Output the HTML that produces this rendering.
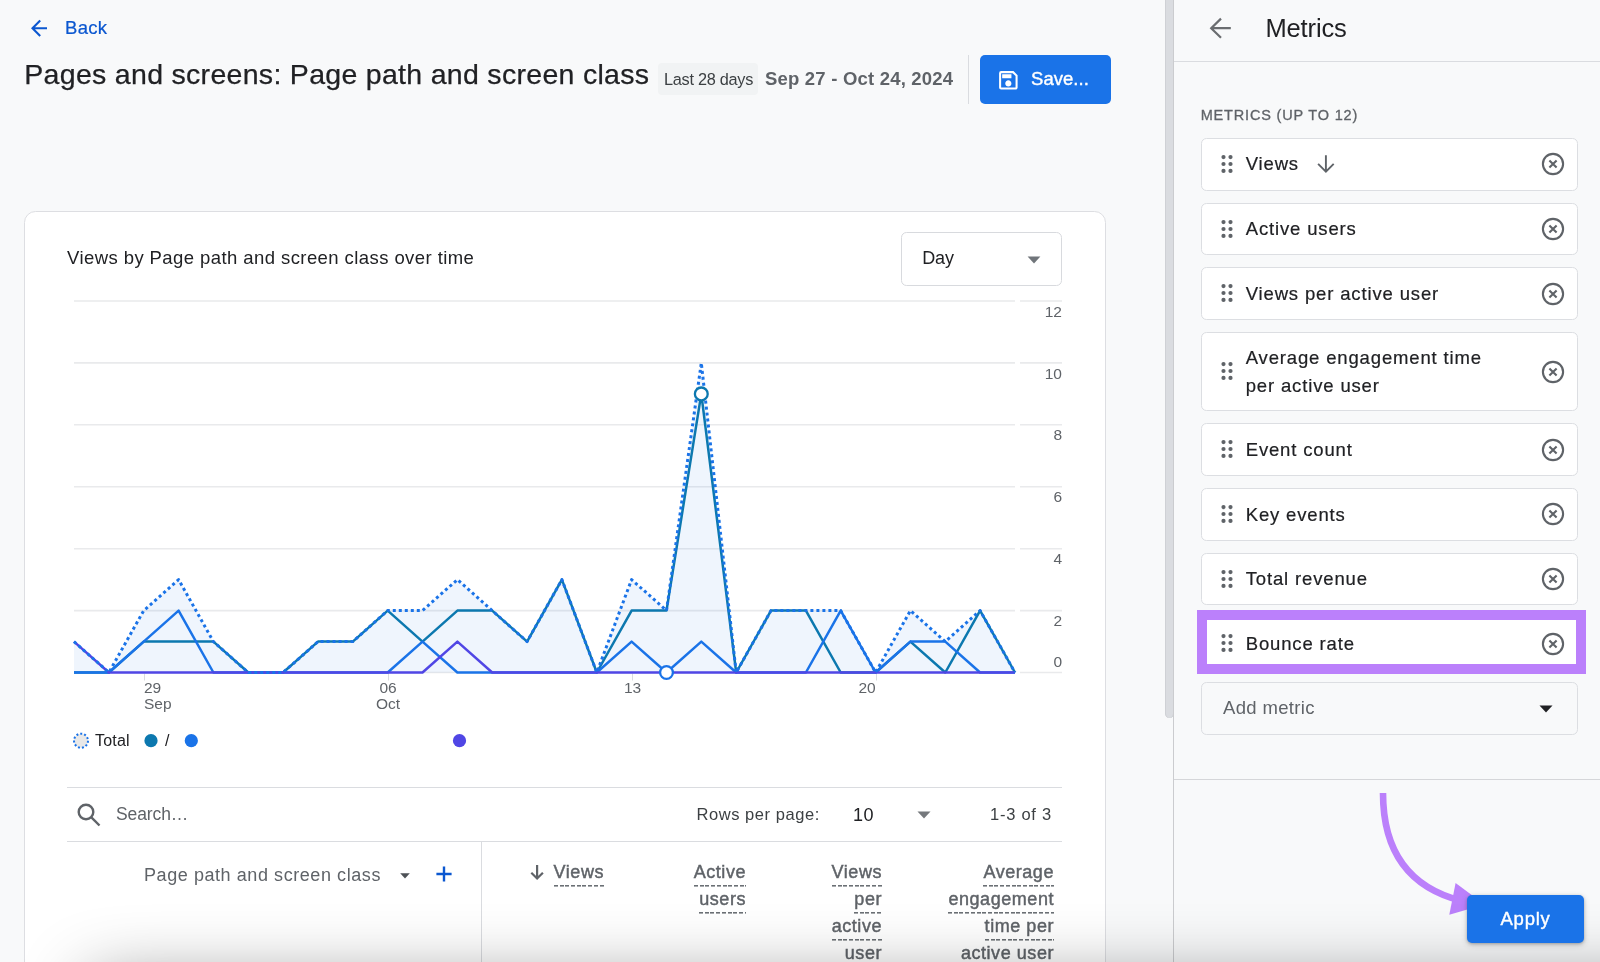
<!DOCTYPE html>
<html>
<head>
<meta charset="utf-8">
<title>Pages and screens</title>
<style>
*{box-sizing:border-box;margin:0;padding:0}
html,body{width:1600px;height:962px;overflow:hidden;background:#f8f9fa}
body{position:relative;font-family:"Liberation Sans",sans-serif;color:#202124;will-change:transform}
.t{position:absolute;white-space:nowrap;line-height:1}
.abs{position:absolute}
.md{-webkit-text-stroke:.4px currentColor}
/* main */
#card{position:absolute;left:24.3px;top:211.4px;width:1081.5px;height:800px;background:#fff;border:1.6px solid #dddee2;border-radius:11.5px}
#chip{position:absolute;left:658px;top:63px;width:100px;height:32px;background:#f1f3f4;border-radius:4px}
#save{position:absolute;left:980px;top:55px;width:131px;height:48.7px;background:#1a73e8;border-radius:5px}
#daybox{position:absolute;left:900.5px;top:232px;width:161.5px;height:53.5px;border:1.5px solid #d8dade;border-radius:5.5px;background:#fff}
.hl{position:absolute;height:1px;background:#dadce0}
.vl{position:absolute;width:1px;background:#dadce0}
/* panel */
#sbar{position:absolute;left:1165px;top:-10px;width:9px;height:728px;background:#dadce0;border-radius:5px;box-shadow:inset 1px 0 0 #cfd1d5,inset -1px 0 0 #cfd1d5}
#pborder{position:absolute;left:1173px;top:0;width:1px;height:962px;background:#cbcccf}
.mbox{position:absolute;left:1201px;width:377.3px;height:52px;background:#fff;border:1.5px solid #dcdee2;border-radius:5.5px}
.mt{position:absolute;left:1245.7px;white-space:nowrap;line-height:1;font-size:18.5px;color:#202124;letter-spacing:.85px;-webkit-text-stroke:.2px #202124}
</style>
</head>
<body>

<!-- ===== HEADER ===== -->
<svg class="abs" style="left:28px;top:16px" width="24" height="24" viewBox="28 16 24 24" fill="none" stroke="#0b57d0" stroke-width="2.1"><path d="M47 28.2H33.2M40.2 20.5L32.5 28.2L40.2 35.9"/></svg>
<div class="t" id="back" style="left:65px;top:19px;font-size:18.5px;color:#0b57d0;letter-spacing:.3px;-webkit-text-stroke:.22px #0b57d0">Back</div>
<div class="t" id="title" style="left:24.3px;top:60px;font-size:28.5px;color:#202124;letter-spacing:.3px;-webkit-text-stroke:.25px #202124">Pages and screens: Page path and screen class</div>
<div id="chip"></div>
<div class="t" id="chiptxt" style="left:664px;top:71.3px;font-size:16.3px;color:#3c4043;letter-spacing:-.27px">Last 28 days</div>
<div class="t" id="daterange" style="left:765px;top:70px;font-size:18.5px;font-weight:700;color:#5f6368;letter-spacing:.2px">Sep 27 - Oct 24, 2024</div>
<div class="vl" style="left:968px;top:55px;height:48.7px"></div>
<div id="save"></div>
<svg class="abs" style="left:995.9px;top:67.5px" width="24.7" height="24.7" viewBox="0 0 24 24"><path d="M17 3H5a2 2 0 0 0-2 2v14a2 2 0 0 0 2 2h14c1.1 0 2-.9 2-2V7l-4-4zm2 16H5V5h11.17L19 7.83V19zm-7-7c-1.66 0-3 1.34-3 3s1.34 3 3 3 3-1.34 3-3-1.34-3-3-3zM6 6h9v4H6z" fill="#fff"/></svg>
<div class="t md" id="savetxt" style="left:1031px;top:70px;font-size:18.5px;color:#fff;letter-spacing:.05px">Save...</div>

<!-- ===== CARD ===== -->
<div id="card"></div>
<div class="t" id="ctitle" style="left:67px;top:249px;font-size:18.5px;color:#202124;letter-spacing:.42px">Views by Page path and screen class over time</div>
<div id="daybox"></div>
<div class="t" id="daytxt" style="left:922.3px;top:249.4px;font-size:18px;color:#202124;letter-spacing:-.2px">Day</div>
<svg class="abs" style="left:1027px;top:255.5px" width="14" height="8" viewBox="0 0 14 8"><path d="M0.6 0.5h12.8L7 7.4z" fill="#70757a"/></svg>

<!-- ===== CHART ===== -->
<svg class="abs" style="left:0;top:0" width="1160" height="962" viewBox="0 0 1160 962" fill="none">
<g stroke="#e9eaec" stroke-width="1.6"><path d="M74 301.0H1015M1020 301.0H1062"/><path d="M74 362.9H1015M1020 362.9H1062"/><path d="M74 424.8H1015M1020 424.8H1062"/><path d="M74 486.8H1015M1020 486.8H1062"/><path d="M74 548.7H1015M1020 548.7H1062"/><path d="M74 610.6H1015M1020 610.6H1062"/><path d="M74 672.5H1015M1020 672.5H1062"/></g>
<g stroke="#dadce0" stroke-width="1"><path d="M144.5 673.5V680.5M388.5 673.5V680.5M632.5 673.5V680.5M876.5 673.5V680.5"/></g>
<polygon points="74.0,672.5 74.0,641.6 108.9,672.5 143.7,610.6 178.6,579.6 213.4,641.6 248.3,672.5 283.1,672.5 318.0,641.6 352.8,641.6 387.7,610.6 422.5,610.6 457.4,579.6 492.2,610.6 527.1,641.6 561.9,579.6 596.8,672.5 631.6,579.6 666.5,610.6 701.3,362.9 736.2,672.5 771.0,610.6 805.9,610.6 840.7,610.6 875.6,672.5 910.4,610.6 945.3,641.6 980.1,610.6 1015.0,672.5 1015.0,672.5" fill="#1a73e8" fill-opacity=".07"/>
<polyline points="74.0,672.5 108.9,672.5 143.7,641.6 178.6,641.6 213.4,641.6 248.3,672.5 283.1,672.5 318.0,641.6 352.8,641.6 387.7,610.6 422.5,641.6 457.4,610.6 492.2,610.6 527.1,641.6 561.9,579.6 596.8,672.5 631.6,610.6 666.5,610.6 701.3,393.9 736.2,672.5 771.0,610.6 805.9,610.6 840.7,672.5 875.6,672.5 910.4,641.6 945.3,672.5 980.1,610.6 1015.0,672.5" stroke="#0c78af" stroke-width="2.5" stroke-linejoin="round"/>
<polyline points="74.0,672.5 108.9,672.5 143.7,641.6 178.6,610.6 213.4,672.5 248.3,672.5 283.1,672.5 318.0,672.5 352.8,672.5 387.7,672.5 422.5,641.6 457.4,672.5 492.2,672.5 527.1,672.5 561.9,672.5 596.8,672.5 631.6,641.6 666.5,672.5 701.3,641.6 736.2,672.5 771.0,672.5 805.9,672.5 840.7,610.6 875.6,672.5 910.4,641.6 945.3,641.6 980.1,672.5 1015.0,672.5" stroke="#1a73e8" stroke-width="2.5" stroke-linejoin="round"/>
<polyline points="74.0,641.6 108.9,672.5 143.7,672.5 178.6,672.5 213.4,672.5 248.3,672.5 283.1,672.5 318.0,672.5 352.8,672.5 387.7,672.5 422.5,672.5 457.4,641.6 492.2,672.5 527.1,672.5 561.9,672.5 596.8,672.5 631.6,672.5 666.5,672.5 701.3,672.5 736.2,672.5 771.0,672.5 805.9,672.5 840.7,672.5 875.6,672.5 910.4,672.5 945.3,672.5 980.1,672.5 1015.0,672.5" stroke="#5046e5" stroke-width="2.5" stroke-linejoin="round"/>
<polyline points="74.0,641.6 108.9,672.5 143.7,610.6 178.6,579.6 213.4,641.6 248.3,672.5 283.1,672.5 318.0,641.6 352.8,641.6 387.7,610.6 422.5,610.6 457.4,579.6 492.2,610.6 527.1,641.6 561.9,579.6 596.8,672.5 631.6,579.6 666.5,610.6 701.3,362.9 736.2,672.5 771.0,610.6 805.9,610.6 840.7,610.6 875.6,672.5 910.4,610.6 945.3,641.6 980.1,610.6 1015.0,672.5" stroke="#1a73e8" stroke-width="3" stroke-dasharray="3 3" stroke-linejoin="round"/>
<circle cx="701.3" cy="393.9" r="6.4" fill="#fff" stroke="#0c78af" stroke-width="2.3"/>
<circle cx="666.5" cy="672.5" r="6.4" fill="#fff" stroke="#1a73e8" stroke-width="2.3"/>
<circle cx="81" cy="740.7" r="7" fill="#e8e8e8" stroke="#1a73e8" stroke-width="2" stroke-dasharray="2 2"/>
<circle cx="151" cy="740.7" r="6.6" fill="#0c78af"/>
<circle cx="191.3" cy="740.7" r="6.6" fill="#1a73e8"/>
<circle cx="459.5" cy="740.7" r="6.6" fill="#5046e5"/>
</svg>
<style>.yl{right:538px;font-size:15.5px;color:#5f6368;text-align:right}.xl{font-size:15.5px;color:#5f6368;line-height:16px !important}</style>
<div class="t yl" style="top:303.6px">12</div>
<div class="t yl" style="top:365.5px">10</div>
<div class="t yl" style="top:427.4px">8</div>
<div class="t yl" style="top:489.4px">6</div>
<div class="t yl" style="top:551.3px">4</div>
<div class="t yl" style="top:613.2px">2</div>
<div class="t yl" style="top:654px">0</div>
<div class="t xl" style="left:144px;top:680px">29<br>Sep</div>
<div class="t xl" style="left:376px;top:680px;text-align:center">06<br>Oct</div>
<div class="t xl" style="left:624px;top:680px">13</div>
<div class="t xl" style="left:858.5px;top:680px">20</div>
<div class="t" id="lgtotal" style="left:95px;top:733px;font-size:16px;color:#202124;letter-spacing:.2px">Total</div>
<div class="t" style="left:165px;top:733px;font-size:16px;color:#202124">/</div>

<!-- ===== TABLE ===== -->
<style>.th{position:absolute;white-space:nowrap;font-size:18px;line-height:27px;color:#5f6368;text-align:right;letter-spacing:.55px;-webkit-text-stroke:.45px #5f6368}.th span{padding-bottom:5px;background:repeating-linear-gradient(90deg,#6b7075 0 4px,transparent 4px 5.7px) left bottom/100% 1.6px no-repeat}</style>
<div class="hl" style="left:67px;top:787px;width:995px"></div>
<svg class="abs" style="left:75px;top:801px" width="28" height="28" viewBox="0 0 28 28" fill="none" stroke="#5f6368" stroke-width="2.4"><circle cx="11" cy="11" r="7.3"/><path d="M16.4 16.4L24.5 24.5" stroke-linecap="butt"/></svg>
<div class="t" id="search" style="left:116px;top:806px;font-size:17.5px;color:#5f6368;letter-spacing:-.1px">Search…</div>
<div class="t" id="rpp" style="left:696.5px;top:805.5px;font-size:16.5px;color:#3c4043;letter-spacing:.55px">Rows per page:</div>
<div class="t" id="rppn" style="left:853px;top:806px;font-size:18px;color:#202124;letter-spacing:.6px">10</div>
<svg class="abs" style="left:917px;top:811px" width="14" height="8" viewBox="0 0 14 8"><path d="M0.5 0.5h13L7 7.5z" fill="#75787c"/></svg>
<div class="t" id="range" style="left:990px;top:805.5px;font-size:16.5px;color:#3c4043;letter-spacing:.75px">1-3 of 3</div>
<div class="hl" style="left:67px;top:841px;width:995px"></div>
<div class="vl" style="left:481px;top:842px;height:130px"></div>
<div class="t" id="dimh" style="left:144px;top:866px;font-size:18px;color:#5f6368;letter-spacing:.57px">Page path and screen class</div>
<svg class="abs" style="left:399.6px;top:873.4px" width="10" height="6" viewBox="0 0 10 6"><path d="M0.2 0.2h9.6L5 5.4z" fill="#4d5156"/></svg>
<svg class="abs" style="left:434.7px;top:865.4px" width="18" height="18" viewBox="0 0 18 18"><path d="M9 1.4v15.2M1.4 9h15.2" stroke="#0b57d0" stroke-width="2.4"/></svg>
<svg class="abs" style="left:527px;top:862px" width="20" height="20" viewBox="0 0 20 20" fill="none" stroke="#5f6368" stroke-width="2.2"><path d="M10.1 3V16.6M4.3 10.7l5.8 5.8 5.8-5.8"/></svg>
<div class="th" id="th1" style="right:996px;top:859px"><span>Views</span></div>
<div class="th" id="th2" style="right:854px;top:859px"><span>Active</span><br><span>users</span></div>
<div class="th" id="th3" style="right:718px;top:859px"><span>Views</span><br><span>per</span><br><span>active</span><br><span>user</span></div>
<div class="th" id="th4" style="right:546px;top:859px"><span>Average</span><br><span>engagement</span><br><span>time per</span><br><span>active user</span></div>


<!-- ===== SCROLLBAR + PANEL ===== -->
<div id="sbar"></div>
<div id="pborder"></div>
<!-- ===== PANEL ===== -->
<svg class="abs" style="left:1204px;top:14px" width="30" height="28" viewBox="1204 14 30 28" fill="none" stroke="#6a6d70" stroke-width="2.2"><path d="M1230.8 28.2H1211.5M1221 18.6L1211.2 28.2L1221 37.8"/></svg>
<div class="t" id="ptitle" style="left:1265.5px;top:15.5px;font-size:25.5px;color:#202124;letter-spacing:-.15px">Metrics</div>
<div class="hl" style="left:1174px;top:61px;width:426px"></div>
<div class="t md" id="plabel" style="left:1200.7px;top:107.6px;font-size:14.5px;color:#5f6368;letter-spacing:.82px;-webkit-text-stroke-width:.3px">METRICS (UP TO 12)</div>
<div class="abs" style="left:1196.6px;top:610.4px;width:389.7px;height:63.6px;background:#bb80fb"></div>
<div class="mbox" style="top:137.9px;height:52.7px"></div>
<svg class="abs" style="left:1220.8px;top:153.9px" width="12" height="20" viewBox="0 0 12 20" fill="#5f6368"><circle cx="2.5" cy="3.1" r="2.1"/><circle cx="9.5" cy="3.1" r="2.1"/><circle cx="2.5" cy="10" r="2.1"/><circle cx="9.5" cy="10" r="2.1"/><circle cx="2.5" cy="16.9" r="2.1"/><circle cx="9.5" cy="16.9" r="2.1"/></svg>
<div class="mt" id="m0" style="top:155.4px">Views</div>
<svg class="abs" style="left:1539.7px;top:151.3px" width="26" height="26" viewBox="0 0 26 26" fill="none" stroke="#5f6368"><circle cx="13" cy="13" r="10.1" stroke-width="2.1"/><path d="M9.4 9.4l7.2 7.2M16.6 9.4l-7.2 7.2" stroke-width="2.1"/></svg>
<div class="mbox" style="top:202.6px;height:52.7px"></div>
<svg class="abs" style="left:1220.8px;top:218.6px" width="12" height="20" viewBox="0 0 12 20" fill="#5f6368"><circle cx="2.5" cy="3.1" r="2.1"/><circle cx="9.5" cy="3.1" r="2.1"/><circle cx="2.5" cy="10" r="2.1"/><circle cx="9.5" cy="10" r="2.1"/><circle cx="2.5" cy="16.9" r="2.1"/><circle cx="9.5" cy="16.9" r="2.1"/></svg>
<div class="mt" id="m1" style="top:220.1px">Active users</div>
<svg class="abs" style="left:1539.7px;top:216.0px" width="26" height="26" viewBox="0 0 26 26" fill="none" stroke="#5f6368"><circle cx="13" cy="13" r="10.1" stroke-width="2.1"/><path d="M9.4 9.4l7.2 7.2M16.6 9.4l-7.2 7.2" stroke-width="2.1"/></svg>
<div class="mbox" style="top:267.2px;height:52.7px"></div>
<svg class="abs" style="left:1220.8px;top:283.3px" width="12" height="20" viewBox="0 0 12 20" fill="#5f6368"><circle cx="2.5" cy="3.1" r="2.1"/><circle cx="9.5" cy="3.1" r="2.1"/><circle cx="2.5" cy="10" r="2.1"/><circle cx="9.5" cy="10" r="2.1"/><circle cx="2.5" cy="16.9" r="2.1"/><circle cx="9.5" cy="16.9" r="2.1"/></svg>
<div class="mt" id="m2" style="top:284.8px">Views per active user</div>
<svg class="abs" style="left:1539.7px;top:280.7px" width="26" height="26" viewBox="0 0 26 26" fill="none" stroke="#5f6368"><circle cx="13" cy="13" r="10.1" stroke-width="2.1"/><path d="M9.4 9.4l7.2 7.2M16.6 9.4l-7.2 7.2" stroke-width="2.1"/></svg>
<div class="mbox" style="top:331.5px;height:79.8px"></div>
<svg class="abs" style="left:1220.8px;top:361.1px" width="12" height="20" viewBox="0 0 12 20" fill="#5f6368"><circle cx="2.5" cy="3.1" r="2.1"/><circle cx="9.5" cy="3.1" r="2.1"/><circle cx="2.5" cy="10" r="2.1"/><circle cx="9.5" cy="10" r="2.1"/><circle cx="2.5" cy="16.9" r="2.1"/><circle cx="9.5" cy="16.9" r="2.1"/></svg>
<div class="mt" id="m3" style="top:344.1px;line-height:27.5px">Average engagement time<br>per active user</div>
<svg class="abs" style="left:1539.7px;top:358.5px" width="26" height="26" viewBox="0 0 26 26" fill="none" stroke="#5f6368"><circle cx="13" cy="13" r="10.1" stroke-width="2.1"/><path d="M9.4 9.4l7.2 7.2M16.6 9.4l-7.2 7.2" stroke-width="2.1"/></svg>
<div class="mbox" style="top:423.3px;height:52.7px"></div>
<svg class="abs" style="left:1220.8px;top:439.4px" width="12" height="20" viewBox="0 0 12 20" fill="#5f6368"><circle cx="2.5" cy="3.1" r="2.1"/><circle cx="9.5" cy="3.1" r="2.1"/><circle cx="2.5" cy="10" r="2.1"/><circle cx="9.5" cy="10" r="2.1"/><circle cx="2.5" cy="16.9" r="2.1"/><circle cx="9.5" cy="16.9" r="2.1"/></svg>
<div class="mt" id="m4" style="top:440.9px">Event count</div>
<svg class="abs" style="left:1539.7px;top:436.8px" width="26" height="26" viewBox="0 0 26 26" fill="none" stroke="#5f6368"><circle cx="13" cy="13" r="10.1" stroke-width="2.1"/><path d="M9.4 9.4l7.2 7.2M16.6 9.4l-7.2 7.2" stroke-width="2.1"/></svg>
<div class="mbox" style="top:488.0px;height:52.7px"></div>
<svg class="abs" style="left:1220.8px;top:504.0px" width="12" height="20" viewBox="0 0 12 20" fill="#5f6368"><circle cx="2.5" cy="3.1" r="2.1"/><circle cx="9.5" cy="3.1" r="2.1"/><circle cx="2.5" cy="10" r="2.1"/><circle cx="9.5" cy="10" r="2.1"/><circle cx="2.5" cy="16.9" r="2.1"/><circle cx="9.5" cy="16.9" r="2.1"/></svg>
<div class="mt" id="m5" style="top:505.5px">Key events</div>
<svg class="abs" style="left:1539.7px;top:501.4px" width="26" height="26" viewBox="0 0 26 26" fill="none" stroke="#5f6368"><circle cx="13" cy="13" r="10.1" stroke-width="2.1"/><path d="M9.4 9.4l7.2 7.2M16.6 9.4l-7.2 7.2" stroke-width="2.1"/></svg>
<div class="mbox" style="top:552.6px;height:52.7px"></div>
<svg class="abs" style="left:1220.8px;top:568.7px" width="12" height="20" viewBox="0 0 12 20" fill="#5f6368"><circle cx="2.5" cy="3.1" r="2.1"/><circle cx="9.5" cy="3.1" r="2.1"/><circle cx="2.5" cy="10" r="2.1"/><circle cx="9.5" cy="10" r="2.1"/><circle cx="2.5" cy="16.9" r="2.1"/><circle cx="9.5" cy="16.9" r="2.1"/></svg>
<div class="mt" id="m6" style="top:570.2px">Total revenue</div>
<svg class="abs" style="left:1539.7px;top:566.1px" width="26" height="26" viewBox="0 0 26 26" fill="none" stroke="#5f6368"><circle cx="13" cy="13" r="10.1" stroke-width="2.1"/><path d="M9.4 9.4l7.2 7.2M16.6 9.4l-7.2 7.2" stroke-width="2.1"/></svg>
<div class="abs" style="left:1206.8px;top:620.3px;width:369.2px;height:43.5px;background:#fff"></div>
<svg class="abs" style="left:1220.8px;top:633.3px" width="12" height="20" viewBox="0 0 12 20" fill="#5f6368"><circle cx="2.5" cy="3.1" r="2.1"/><circle cx="9.5" cy="3.1" r="2.1"/><circle cx="2.5" cy="10" r="2.1"/><circle cx="9.5" cy="10" r="2.1"/><circle cx="2.5" cy="16.9" r="2.1"/><circle cx="9.5" cy="16.9" r="2.1"/></svg>
<div class="mt" id="m7" style="top:634.8px">Bounce rate</div>
<svg class="abs" style="left:1539.7px;top:630.7px" width="26" height="26" viewBox="0 0 26 26" fill="none" stroke="#5f6368"><circle cx="13" cy="13" r="10.1" stroke-width="2.1"/><path d="M9.4 9.4l7.2 7.2M16.6 9.4l-7.2 7.2" stroke-width="2.1"/></svg>
<svg class="abs" style="left:1316px;top:154px" width="20" height="20" viewBox="0 0 20 20" fill="none" stroke="#5f6368" stroke-width="1.9"><path d="M9.9 1.3V17.4M2.1 9.8l7.8 7.8 7.8-7.8"/></svg>
<div class="mbox" style="top:682.2px;height:52.7px;background:#f8f9fa"></div>
<div class="t" id="addm" style="left:1223px;top:698.5px;font-size:18.5px;color:#5f6368;letter-spacing:.35px">Add metric</div>
<svg class="abs" style="left:1539px;top:705px" width="14" height="8" viewBox="0 0 14 8"><path d="M0.5 0.5h13L7 7.5z" fill="#202124"/></svg>
<div class="hl" style="left:1174px;top:779px;width:426px;background:#d5d6d9"></div>
<div class="abs" style="left:1467.3px;top:895px;width:116.3px;height:48px;z-index:3;background:#1a73e8;border-radius:5px;box-shadow:0 1px 3px rgba(60,64,67,.35),0 2px 6px rgba(60,64,67,.2)"></div>
<div class="t md" id="apply" style="z-index:4;left:1500.5px;top:910.2px;font-size:18.5px;color:#fff;letter-spacing:.75px">Apply</div>
<svg class="abs" style="left:1360px;top:780px" width="140" height="150" viewBox="1360 780 140 150" fill="none"><path d="M1383 793C1383 852 1410 888 1462 901" stroke="#bb80fb" stroke-width="6.6"/><path d="M1455.6 883L1484.5 904.4L1449.3 914.8z" fill="#bb80fb"/></svg>

<!-- bottom vignette -->
<div class="abs" style="left:110px;top:1002px;width:1700px;height:60px;box-shadow:0 0 70px 20px rgba(0,0,0,.44)"></div>

</body>
</html>
